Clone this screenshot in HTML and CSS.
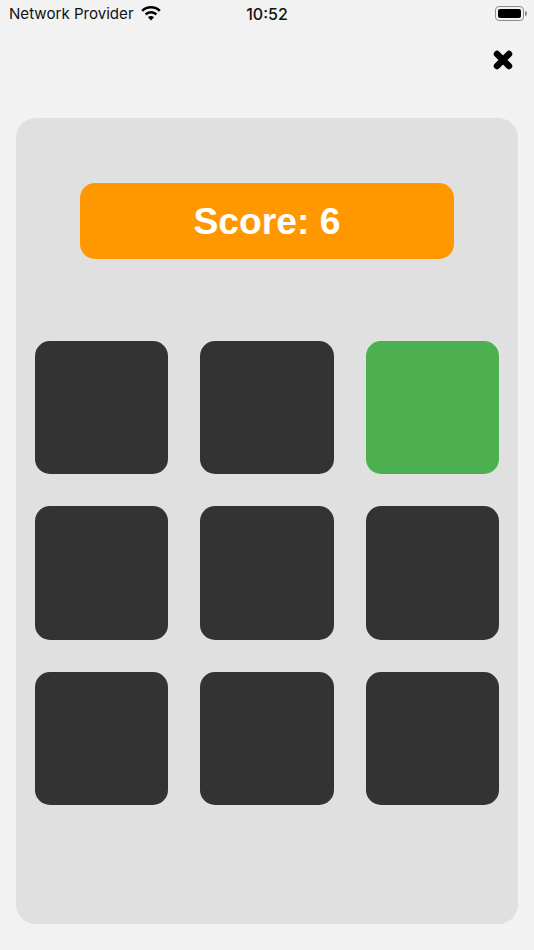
FILE: index.html
```html
<!DOCTYPE html>
<html lang="en">
<head>
<meta charset="utf-8">
<title>Score</title>
<link rel="stylesheet" href="styles.css">
</head>
<body>
<div class="status">
  <div class="status-left">
    <span class="carrier">Network Provider</span>
    <svg class="wifi" width="20" height="15" viewBox="0 0 20 15"><path d="M10 0C6.200 0 2.800 1.500.3 3.900l1.800 1.900C4.100 3.800 6.900 2.600 10 2.600s5.900 1.200 7.900 3.200l1.800-1.900C17.200 1.500 13.800 0 10 0z"/><path d="M10 5C7.600 5 5.400 6 3.800 7.500l1.800 1.900C6.800 8.300 8.300 7.600 10 7.600s3.200.7 4.400 1.800l1.800-1.900C14.600 6 12.400 5 10 5z"/><path d="M10 10c-1.100 0-2.200.4-3 1.200l3 3.200 3-3.200c-.8-.8-1.900-1.200-3-1.200z"/></svg>
  </div>
  <span class="clock">10:52</span>
  <div class="status-right">
    <span class="battery"><span class="battery-fill"></span></span>
    <span class="battery-cap"></span>
  </div>
</div>
<div class="toolbar">
  <svg class="close" width="22" height="22" viewBox="0 0 22 22"><path d="M5 5 17 17M17 5 5 17" fill="none" stroke="#000" stroke-width="6.500" stroke-linecap="round"/></svg>
</div>
<main class="panel">
  <div class="score">Score: 6</div>
  <div class="grid">
    <div class="cell"></div>
    <div class="cell"></div>
    <div class="cell active"></div>
    <div class="cell"></div>
    <div class="cell"></div>
    <div class="cell"></div>
    <div class="cell"></div>
    <div class="cell"></div>
    <div class="cell"></div>
  </div>
</main>
</body>
</html>
```
FILE: styles.css
```css
* { box-sizing: border-box; }
html, body { margin: 0; height: 100%; }
body {
  width: 534px;
  height: 950px;
  overflow: hidden;
  background: #f2f2f2;
  font-family: "Liberation Sans", Arial, sans-serif;
  display: flex;
  flex-direction: column;
}
.status {
  height: 27px;
  display: grid;
  grid-template-columns: 1fr auto 1fr;
  align-items: center;
  padding: 0 7px 0 9px;
  color: #111;
}
.status-left { display: flex; align-items: center; gap: 7px; }
.carrier { font-family: Inter, sans-serif; font-size: 15.100px; }
.wifi { margin-top: -1px; fill: #000; }
.clock { margin-right: 2px; font-family: Inter, sans-serif; font-size: 16px; font-weight: 500; }
.status-right { display: flex; justify-content: flex-end; align-items: center; }
.battery {
  width: 29px;
  height: 15px;
  padding: 2px;
  border: 1px solid #8e8e8e;
  border-radius: 4px;
  display: flex;
}
.battery-fill { flex: 1; background: #000; border-radius: 2px; }
.battery-cap { width: 2px; height: 5px; margin-left: 1px; background: #8e8e8e; border-radius: 0 2px 2px 0; }
.toolbar {
  height: 91px;
  padding: 22px 20px 0 0;
  display: flex;
  justify-content: flex-end;
  align-items: flex-start;
}
.panel {
  width: 502px;
  height: 806px;
  margin-left: 16px;
  padding: 65px 19px 0;
  background: #e0e0e0;
  border-radius: 20px;
  display: flex;
  flex-direction: column;
  align-items: center;
}
.score {
  width: 374px;
  height: 76px;
  padding-top: 1px;
  background: #ff9800;
  border-radius: 15px;
  color: #fff;
  font-size: 37.300px;
  font-weight: 700;
  display: flex;
  align-items: center;
  justify-content: center;
}
.grid {
  width: 100%;
  margin-top: 82px;
  display: grid;
  grid-template-columns: repeat(3, 1fr);
  gap: 32px;
}
.cell {
  aspect-ratio: 1;
  background: #333;
  border-radius: 15px;
}
.active { background: #4caf50; }
```
